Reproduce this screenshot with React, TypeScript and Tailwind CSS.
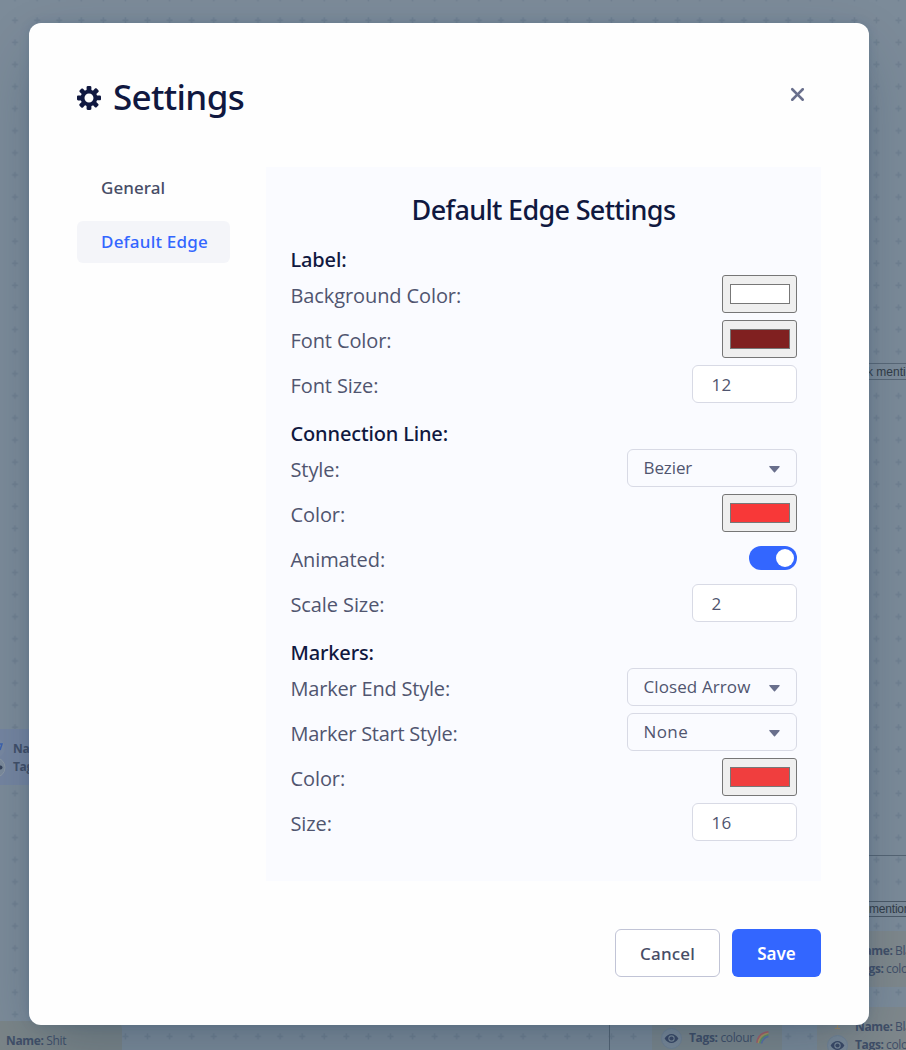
import type { ReactNode } from "react";

function CogIcon() {
  return (
    <svg className="size-6 shrink-0" viewBox="0 0 16 16" fill="currentColor">
      <path
        fillRule="evenodd"
        d="M15.19 6.39h-1.85c-.11-.37-.27-.71-.45-1.04l1.36-1.36c.31-.31.31-.82 0-1.13l-1.13-1.13c-.31-.31-.82-.31-1.13 0l-1.36 1.36c-.33-.17-.67-.33-1.04-.44V.79c0-.44-.36-.8-.8-.8h-1.6c-.44 0-.8.36-.8.8v1.86c-.39.12-.75.28-1.1.47l-1.3-1.3c-.3-.3-.79-.3-1.09 0L1.82 2.91c-.3.3-.3.79 0 1.09l1.3 1.3c-.2.34-.36.7-.48 1.09H.79c-.44 0-.8.36-.8.8v1.6c0 .44.36.8.8.8h1.85c.11.37.27.71.45 1.04l-1.36 1.36c-.31.31-.31.82 0 1.13l1.13 1.13c.31.31.82.31 1.13 0l1.36-1.36c.33.18.67.33 1.04.44v1.86c0 .44.36.8.8.8h1.6c.44 0 .8-.36.8-.8v-1.86c.39-.12.75-.28 1.1-.47l1.3 1.3c.3.3.79.3 1.09 0l1.09-1.09c.3-.3.3-.79 0-1.09l-1.3-1.3c.19-.35.36-.71.48-1.1h1.85c.44 0 .8-.36.8-.8v-1.6a.816.816 0 00-.81-.79zm-7.2 4.6c-1.66 0-3-1.34-3-3s1.34-3 3-3 3 1.34 3 3-1.34 3-3 3z"
      />
    </svg>
  );
}

function CrossIcon() {
  return (
    <svg className="size-[21px]" viewBox="0 0 16 16" fill="currentColor">
      <path d="M9.41 8l3.29-3.29c.19-.18.3-.43.3-.71a1.003 1.003 0 00-1.71-.71L8 6.59l-3.29-3.3a1.003 1.003 0 00-1.42 1.42L6.59 8 3.3 11.29c-.19.18-.3.43-.3.71a1.003 1.003 0 001.71.71L8 9.41l3.29 3.29c.18.19.43.3.71.3a1.003 1.003 0 00.71-1.71L9.41 8z" />
    </svg>
  );
}

function CaretIcon() {
  return (
    <svg className="size-[21px]" viewBox="0 0 16 16" fill="currentColor">
      <path d="M12 6.5c0-.28-.22-.5-.5-.5h-7a.495.495 0 00-.37.83l3.5 4c.09.1.22.17.37.17s.28-.07.37-.17l3.5-4c.08-.09.13-.2.13-.33z" />
    </svg>
  );
}

function EyeBadge({ className }: { className: string }) {
  return (
    <svg className={"absolute size-[21px] " + className} viewBox="0 0 21 21">
      <circle cx="10.5" cy="10.5" r="10" fill="#7b8a99" stroke="#718295" />
      <path fill="#3b4966" fillRule="evenodd" d="M3.6 10.5C5.4 7.6 7.8 6 10.5 6s5.1 1.6 6.9 4.5C15.6 13.4 13.2 15 10.5 15s-5.1-1.6-6.9-4.5zM10.5 7.300a3.200 3.200 0 100 6.400 3.200 3.200 0 000-6.400z" />
      <circle cx="10.5" cy="10.5" r="2.1" fill="#3b4966" />
    </svg>
  );
}

function Rainbow({ className }: { className: string }) {
  return (
    <svg className={"absolute size-[13px] " + className} viewBox="0 0 12 12" fill="none" strokeWidth="1.5">
      <path d="M.8 11C1.500 5.500 5 1.500 11.500.8" stroke="#a85f68" />
      <path d="M2.200 11.200C3 6.500 6 3 11.500 2.200" stroke="#b0955a" />
      <path d="M3.600 11.400C4.400 7.500 7 4.400 11.500 3.600" stroke="#5f9468" />
      <path d="M5 11.600C5.800 8.500 8 5.800 11.500 5" stroke="#5a70ac" />
    </svg>
  );
}

const meta = "absolute whitespace-nowrap text-[12px] leading-4 tracking-[-0.35px] text-[#414f68]";

function Canvas() {
  return (
    <div className="absolute inset-0 overflow-hidden bg-[#7c8b99]">
      <svg className="absolute inset-0 size-full">
        <defs>
          <pattern id="grid" x="4" y="9.4" width="22.09" height="22.09" patternUnits="userSpaceOnUse">
            <path d="M8 11h6M11 8v6" stroke="#708090" strokeWidth="1.6" />
          </pattern>
        </defs>
        <rect width="100%" height="100%" fill="url(#grid)" />
        <path d="M869 855.5h37M609.5 1020v30" stroke="#566574" fill="none" />
      </svg>
      <div className="absolute left-0 top-[729px] h-14 w-[60px] bg-[#7585a0]" />
      <svg className="absolute left-[-16px] top-[736px]" width="22" height="42" viewBox="0 0 22 42">
        <circle cx="11" cy="12" r="10" fill="#7888a0" />
        <path d="M16 8h2l-2 6" fill="none" stroke="#3d62ae" strokeWidth="1.5" />
        <circle cx="11" cy="31.5" r="10" fill="#7b8a9b" stroke="#8b97a5" />
        <circle cx="16.5" cy="31.5" r="2" fill="#35425a" />
      </svg>
      <b className={meta + " left-[13px] top-[741px]"}>Name:</b>
      <b className={meta + " left-[13px] top-[759px]"}>Tags:</b>

      <div className="absolute -left-3 top-[1021px] h-14 w-[134px] rounded-lg bg-[#7b8588]" />
      <span className={meta + " left-[6px] top-[1033px]"}><b>Name:</b> Shit</span>

      <div className="absolute left-[652px] top-[1000px] h-14 w-[130px] rounded-lg bg-[#7c878c]" />
      <EyeBadge className="left-[661px] top-[1028px]" />
      <span className={meta + " left-[689px] top-[1030px]"}><b>Tags:</b> colour</span>
      <Rainbow className="left-[756px] top-[1031px]" />

      <div className="absolute left-[817px] top-[931px] h-14 w-[100px] bg-[#7f888c]" />
      <b className={meta + " left-[855px] top-[943px]"}>Name:</b>
      <span className={meta + " left-[895px] top-[943px]"}>Black</span>
      <b className={meta + " left-[855px] top-[961px]"}>Tags:</b>
      <span className={meta + " left-[886px] top-[961px]"}>colour</span>

      <div className="absolute left-[817px] top-[1007px] h-14 w-[100px] bg-[#7f888c]" />
      <svg className="absolute left-[834px] top-[1022px]" width="8" height="8"><path d="M3.5 0v6M1 6.5h5" stroke="#a38a62" fill="none" /></svg>
      <EyeBadge className="left-[827px] top-[1035px]" />
      <b className={meta + " left-[855px] top-[1019px]"}>Name:</b>
      <span className={meta + " left-[895px] top-[1019px]"}>Black</span>
      <b className={meta + " left-[855px] top-[1037px]"}>Tags:</b>
      <span className={meta + " left-[886px] top-[1037px]"}>colour</span>

      <div className="absolute left-[800px] top-[363px] flex h-[17px] w-[130px] items-center border border-[#596877] bg-[#7c8b99] pl-[66px] font-['Liberation_Sans',sans-serif] text-[12px] whitespace-nowrap text-[#323c47]">k mentions</div>
      <div className="absolute left-[800px] top-[901px] flex h-4 w-[130px] items-center border border-[#4b5967] bg-[#7c8b99] pl-[68px] font-['Liberation_Sans',sans-serif] text-[12px] tracking-[-0.2px] whitespace-nowrap text-[#323c47]">mentions</div>
    </div>
  );
}

function Section({ title, children }: { title: string; children: ReactNode }) {
  return (
    <section>
      <h3 className="h-[39px] pt-[8px] pl-[0.5px] font-['Noto_Sans',sans-serif] text-[20px] leading-[31px] font-medium tracking-[-0.15px] text-[#101840]">{title}</h3>
      {children}
    </section>
  );
}

function Row({ label, children, spacing = "tracking-[-0.1px]" }: { label: string; children: ReactNode; spacing?: string }) {
  return (
    <div className="flex h-[45px] justify-between">
      <span className={"pt-[6px] pl-[0.5px] text-[20px] leading-[30px] text-[#50556f] " + spacing}>{label}</span>
      {children}
    </div>
  );
}

function Swatch({ fill }: { fill: string }) {
  return (
    <div className="h-[38px] w-[75px] rounded-[3px] border border-[#767676] bg-[#efefef] px-[7px] py-2">
      <div className={"h-5 w-[60px] border border-[#777777] " + fill} />
    </div>
  );
}

function NumberBox({ value }: { value: string }) {
  return (
    <div className="h-[38px] w-[105px] rounded-[6px] border border-[#d8dae5] bg-white pl-[18.500px] text-[17px] leading-[37px] tracking-[0.2px] text-[#50556f]">{value}</div>
  );
}

function Select({ value, spacing }: { value: string; spacing: string }) {
  return (
    <div className="flex h-[38px] w-[170px] items-center justify-between rounded-[6px] border border-[#d8dae5] pr-[11px] pl-[15.500px] text-[#696f8c]">
      <span className={"text-[17px] leading-9 text-[#50556f] " + spacing}>{value}</span>
      <CaretIcon />
    </div>
  );
}

export default function App() {
  return (
    <div className="relative h-[1050px] w-[906px] overflow-hidden pt-[23px] pl-[29px] font-['Open_Sans','Noto_Sans',sans-serif]">
      <Canvas />
      <div className="relative flex h-[1002px] w-[840px] flex-col rounded-[12px] bg-[#fefefe] px-12 shadow-[0_24px_60px_-12px_rgba(16,42,72,0.32),0_0_10px_rgba(60,90,125,0.25)]">
        <header className="flex h-36 justify-between pt-[45px]">
          <div className="flex h-[60px] items-center gap-[12px] text-[#101840]">
            <CogIcon />
            <h1 className="pb-[3px] font-['Noto_Sans',sans-serif] text-[35px] leading-none font-medium tracking-[-0.65px]">Settings</h1>
          </div>
          <button className="mt-[16px] mr-[13px] flex size-[21px] items-center justify-center text-[#696f8c]" aria-label="Close">
            <CrossIcon />
          </button>
        </header>

        <div className="flex gap-9">
          <nav className="flex w-[153px] flex-col gap-3 font-['Noto_Sans',sans-serif] text-[17px] leading-[42px] font-medium">
            <a className="h-[42px] rounded-[6px] px-6 tracking-[0.05px] text-[#474d66]">General</a>
            <a className="h-[42px] rounded-[6px] bg-[#f4f5f9] px-6 tracking-[0.2px] whitespace-nowrap text-[#3366ff]">Default Edge</a>
          </nav>

          <main className="h-[714px] w-[555px] bg-[#fafbff] px-6 pt-6">
            <h2 className="h-[45px] text-center font-['Noto_Sans',sans-serif] text-[27px] leading-[38px] font-medium tracking-[-0.68px] text-[#101840]">Default Edge Settings</h2>
            <Section title="Label:">
              <Row label="Background Color:"><Swatch fill="bg-white" /></Row>
              <Row label="Font Color:"><Swatch fill="bg-[#802020]" /></Row>
              <Row label="Font Size:"><NumberBox value="12" /></Row>
            </Section>
            <Section title="Connection Line:">
              <Row label="Style:"><Select value="Bezier" spacing="tracking-[-0.1px]" /></Row>
              <Row label="Color:"><Swatch fill="bg-[#f83838]" /></Row>
              <Row label="Animated:">
                <div className="mt-[7px] flex h-6 w-12 items-center justify-end rounded-full bg-[#3366ff] px-[3px]">
                  <div className="size-[18px] rounded-full bg-white" />
                </div>
              </Row>
              <Row label="Scale Size:"><NumberBox value="2" /></Row>
            </Section>
            <Section title="Markers:">
              <Row label="Marker End Style:" spacing="tracking-[-0.2px]"><Select value="Closed Arrow" spacing="tracking-[0.1px]" /></Row>
              <Row label="Marker Start Style:" spacing="tracking-[-0.25px]"><Select value="None" spacing="tracking-[0.4px]" /></Row>
              <Row label="Color:"><Swatch fill="bg-[#f03e3e]" /></Row>
              <Row label="Size:"><NumberBox value="16" /></Row>
            </Section>
          </main>
        </div>

        <footer className="mt-12 flex justify-end gap-3 font-['Noto_Sans',sans-serif] text-[17px] leading-[47px]">
          <button className="h-12 w-[105px] rounded-[6px] border border-[#c1c4d6] bg-white font-medium tracking-[0.15px] text-[#474d66]">Cancel</button>
          <button className="h-12 w-[89px] rounded-[6px] bg-[#3366ff] font-semibold text-white">Save</button>
        </footer>
      </div>
    </div>
  );
}
